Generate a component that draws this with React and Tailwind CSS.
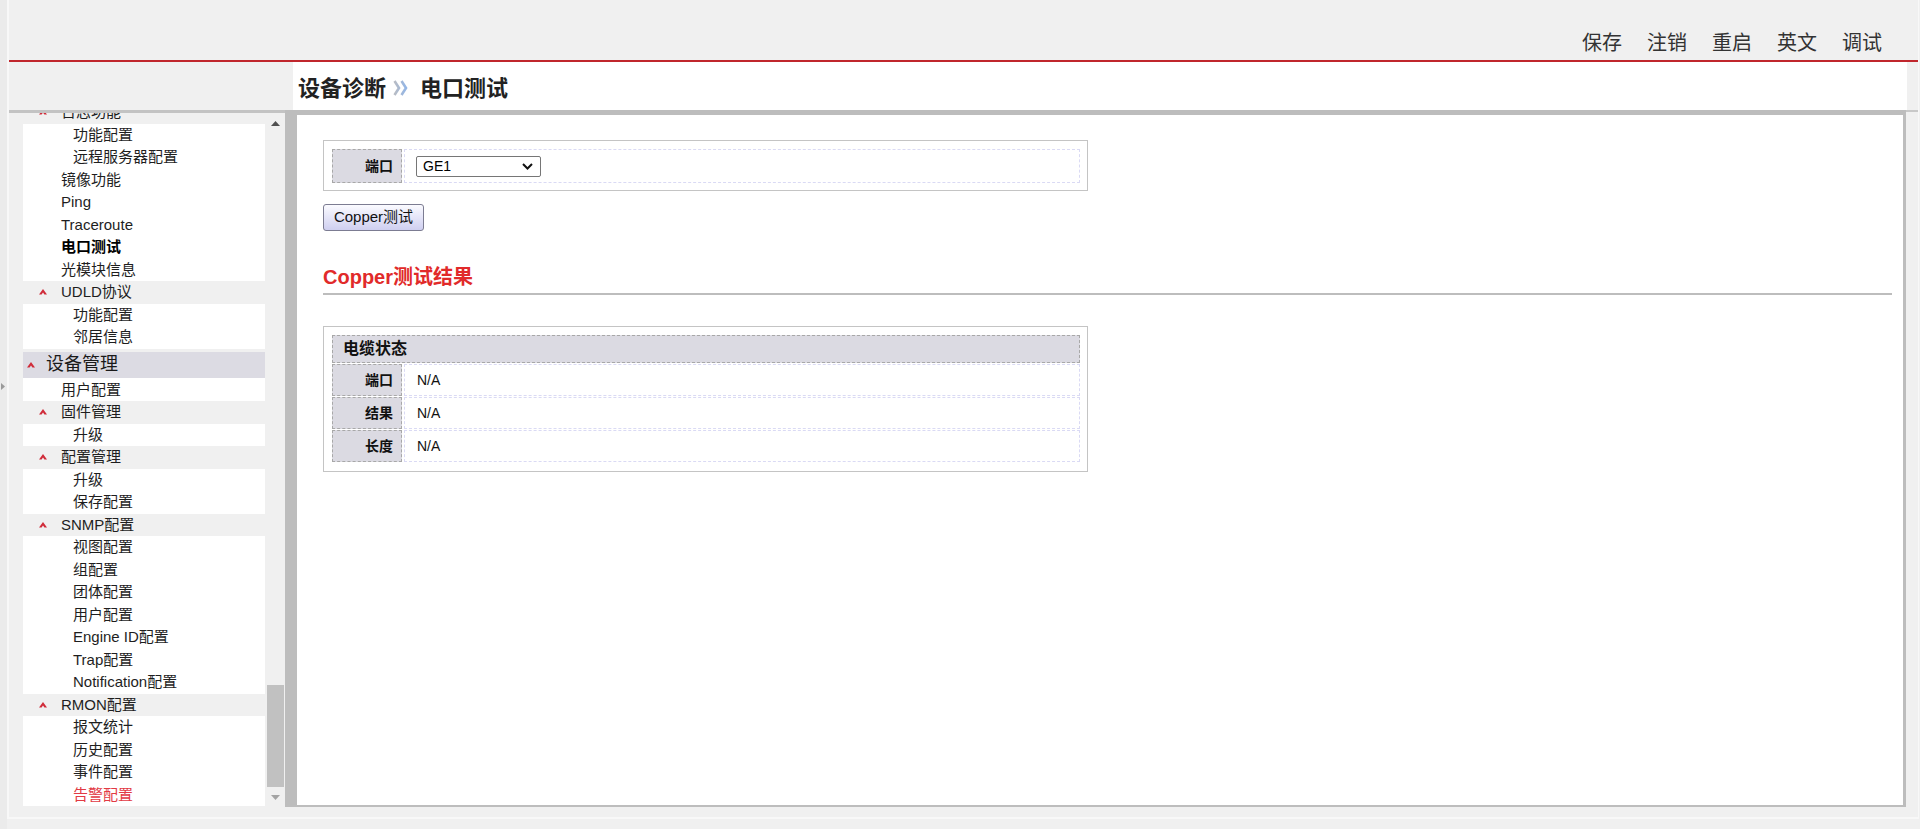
import React from "react";

const sections = [
  { head: "日志功能" },
  {
    items: [
      ["功能配置", 3],
      ["远程服务器配置", 3],
      ["镜像功能", 2],
      ["Ping", 2],
      ["Traceroute", 2],
      ["电口测试", 2, "active"],
      ["光模块信息", 2],
    ],
  },
  { head: "UDLD协议" },
  { items: [["功能配置", 3], ["邻居信息", 3]] },
  { top: "设备管理" },
  { items: [["用户配置", 2]], first: true },
  { head: "固件管理" },
  { items: [["升级", 3]] },
  { head: "配置管理" },
  { items: [["升级", 3], ["保存配置", 3]] },
  { head: "SNMP配置" },
  {
    items: [
      ["视图配置", 3],
      ["组配置", 3],
      ["团体配置", 3],
      ["用户配置", 3],
      ["Engine ID配置", 3],
      ["Trap配置", 3],
      ["Notification配置", 3],
    ],
  },
  { head: "RMON配置" },
  { items: [["报文统计", 3], ["历史配置", 3], ["事件配置", 3], ["告警配置", 3, "alert"]] },
];

const navLinks = ["保存", "注销", "重启", "英文", "调试"];

function Caret() {
  return (
    <svg width="8" height="6" viewBox="0 0 8 6" className="shrink-0">
      <path d="M0 5.6 L4 0 L8 5.6 L5.4 5.6 L4 3.6 L2.6 5.6 Z" fill="#d02c3a" />
    </svg>
  );
}

function SideMenu() {
  return (
    <div className="-mt-[12px] flex flex-col">
      {sections.map((s, i) => {
        if (s.head) {
          return (
            <div key={i} className="h-[22.5px] flex items-center pl-[16px] gap-[14px] text-[15px] text-[#1e1e1e]">
              <Caret />
              <span>{s.head}</span>
            </div>
          );
        }
        if (s.top) {
          return (
            <div key={i} className="mt-[3px] h-[26px] bg-[#dcdbe3] flex items-center pl-[4px] gap-[11px] text-[18px] text-[#1a1a1a]">
              <Caret />
              <span>{s.top}</span>
            </div>
          );
        }
        return (
          <div key={i} className={"bg-white flex flex-col " + (s.first ? "pt-[1px]" : "")}>
            {s.items.map(([label, lv, kind], j) => (
              <div
                key={j}
                className={
                  "h-[22.5px] leading-[22.5px] text-[15px] whitespace-nowrap " +
                  (lv === 3 ? "pl-[50px] " : "pl-[38px] ") +
                  (kind === "active" ? "font-bold text-black" : kind === "alert" ? "text-[#e23a44]" : "text-[#1e1e1e]")
                }
              >
                {label}
              </div>
            ))}
          </div>
        );
      })}
    </div>
  );
}

function Scrollbar() {
  return (
    <div className="w-[20px] shrink-0 bg-[#f0f0f0] flex flex-col">
      <div className="h-[20px] flex items-center justify-center">
        <svg width="9" height="5" viewBox="0 0 9 5">
          <path d="M0 5 L4.5 0 L9 5 Z" fill="#505050" />
        </svg>
      </div>
      <div className="flex-1" />
      <div className="h-[102px] ml-[2px] w-[17px] bg-[#c1c1c1]" />
      <div className="h-[20px] flex items-center justify-center">
        <svg width="9" height="5" viewBox="0 0 9 5">
          <path d="M0 0 L9 0 L4.5 5 Z" fill="#a3a3a3" />
        </svg>
      </div>
    </div>
  );
}

function LabelCell({ children, h }) {
  return (
    <div className={"w-[70px] shrink-0 bg-[#dbdae2] border border-dashed border-[#a8a8a8] flex items-center justify-end pr-[8px] text-[14px] font-bold text-[#111] " + h}>
      {children}
    </div>
  );
}

function ResultRow({ label }) {
  return (
    <div className="flex gap-[2px] h-[32px]">
      <LabelCell h="h-[32px]">{label}</LabelCell>
      <div className="flex-1 border border-dashed border-[#dadaf4] flex items-center pl-[12px] text-[14px] text-[#111]">N/A</div>
    </div>
  );
}

function Content() {
  return (
    <div className="flex flex-col">
      <div className="w-[765px] border border-[#c4c4c4] pt-[8px] pb-[7px] pl-[8px] pr-[7px]">
        <div className="flex gap-[2px] h-[34px]">
          <LabelCell h="h-[34px]">端口</LabelCell>
          <div className="flex-1 border border-dashed border-[#dadaf4] flex items-center pl-[11px]">
            <div className="w-[125px] h-[21px] border border-[#767676] rounded-[2px] bg-white flex items-center justify-between pl-[6px] pr-[7px] text-[14px] text-black">
              <span>GE1</span>
              <svg width="11" height="7" viewBox="0 0 11 7">
                <path d="M1 1 L5.5 5.5 L10 1" fill="none" stroke="#111" strokeWidth="2" />
              </svg>
            </div>
          </div>
        </div>
      </div>

      <button className="mt-[13px] w-[101px] h-[27px] border border-[#7c7c92] rounded-[3px] bg-linear-to-b from-[#fbfbff] to-[#cfcff0] text-[15px] text-[#111] flex items-center justify-center">
        Copper测试
      </button>

      <div className="mt-[34px] h-[24px] leading-[24px] text-[20px] font-bold text-[#e12a2a]">Copper测试结果</div>
      <div className="mt-[4px] h-[2px] bg-[#bdbdbd]" />

      <div className="mt-[31px] w-[765px] border border-[#c4c4c4] pt-[8px] pb-[9px] pl-[8px] pr-[7px] flex flex-col gap-[1px]">
        <div className="h-[28px] bg-[#dbdae2] border border-dashed border-[#a8a8a8] flex items-center pl-[10px] text-[16px] font-bold text-[#111]">
          电缆状态
        </div>
        <ResultRow label="端口" />
        <ResultRow label="结果" />
        <ResultRow label="长度" />
      </div>
    </div>
  );
}

export default function App() {
  return (
    <div className="w-[1920px] h-[829px] bg-[#f0f0f0] flex overflow-hidden font-[family-name:Liberation_Sans,Noto_Sans_CJK_SC,sans-serif]">
      <div className="w-[7px] shrink-0 bg-[#ebebeb] pt-[383px]">
        <svg width="5" height="7" viewBox="0 0 5 7" className="ml-[1px]">
          <path d="M0 0 L4 3.5 L0 7 Z" fill="#9a9a9a" />
        </svg>
      </div>

      <div className="w-[1912px] shrink-0 flex flex-col">
        <div className="h-[817px] flex flex-col border-l-[2px] border-r-[1px] border-[#f8f8f8]">
          {/* top links */}
          <div className="h-[60px] flex justify-end items-center pt-[26px] pr-[36px] gap-[25px] text-[20px] text-[#333]">
            {navLinks.map((t) => (
              <span key={t} className="leading-[26px]">{t}</span>
            ))}
          </div>
          <div className="h-[2px] bg-[#c0262c]" />

          {/* breadcrumb */}
          <div className="h-[48px] flex">
            <div className="w-[284px] shrink-0 bg-[#f0f0f0]" />
            <div className="w-[1614px] shrink-0 bg-white flex items-center pt-[4px] pl-[5px] gap-[6px] text-[22px] font-bold text-[#222]">
              <span>设备诊断</span>
              <svg width="18" height="18" viewBox="0 0 18 18">
                <defs>
                  <linearGradient id="bc" x1="0" x2="1" y1="0" y2="0">
                    <stop offset="0" stopColor="#b8bcc4" />
                    <stop offset="1" stopColor="#94b6e6" />
                  </linearGradient>
                </defs>
                <path d="M2.5 2 L7 9 L2.5 16 M9.5 2 L14 9 L9.5 16" fill="none" stroke="url(#bc)" strokeWidth="2.6" />
              </svg>
              <span className="ml-[4px]">电口测试</span>
            </div>
            <div className="flex-1 bg-[#f0f0f0]" />
          </div>

          {/* body */}
          <div className="h-[697px] flex">
            <div className="w-[276px] shrink-0 flex flex-col border-t-[3px] border-[#c3c3c3]">
              <div className="flex-1 flex min-h-0">
                <div className="w-[14px] shrink-0" />
                <div className="w-[242px] shrink-0 overflow-hidden">
                  <SideMenu />
                </div>
                <Scrollbar />
              </div>
            </div>

            <div className="w-[1621px] shrink-0 bg-white border-t-[5px] border-l-[12px] border-r-[3px] border-b-[2px] border-[#bdbdbd] pt-[25px] pl-[26px] pr-[11px]">
              <Content />
            </div>

            <div className="flex-1 border-t-[2px] border-[#c8c8c8]" />
          </div>

          <div className="h-[10px]" />
        </div>
        <div className="h-[2px] bg-[#f8f8f8]" />
        <div className="flex-1" />
      </div>
    </div>
  );
}
